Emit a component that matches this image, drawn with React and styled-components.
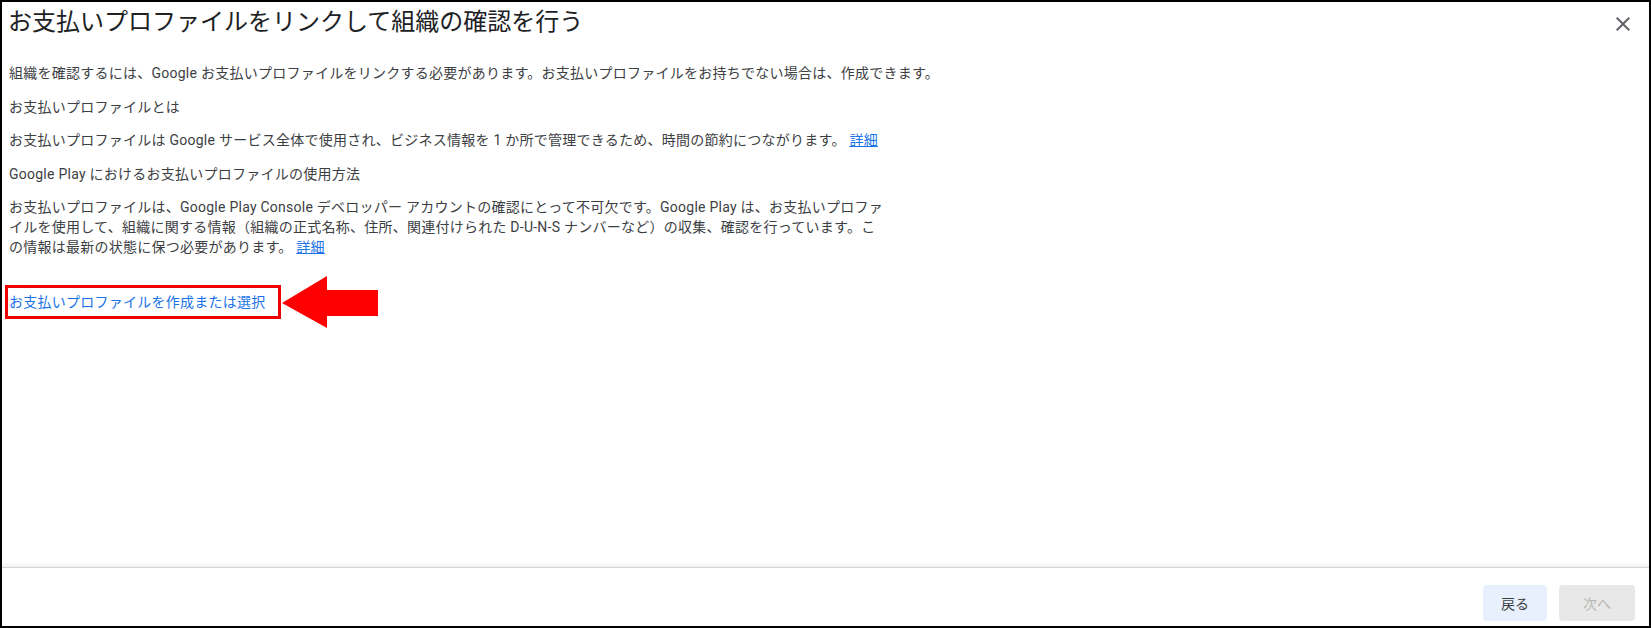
import React from 'react';
import styled, { createGlobalStyle } from 'styled-components';

const GlobalStyle = createGlobalStyle`
  body {
    margin: 0;
    background: #fff;
    font-family: Roboto, "Noto Sans CJK JP", sans-serif;
  }
`;

const CloseIcon = () => (
  <svg width="24" height="24" viewBox="0 0 24 24" fill="#5f6368">
    <path d="M19 6.41 17.59 5 12 10.59 6.41 5 5 6.41 10.59 12 5 17.59 6.41 19 12 13.41 17.59 19 19 17.59 13.41 12z" />
  </svg>
);

const Arrow = () => (
  <svg width="96" height="52" viewBox="0 0 96 52">
    <polygon points="0,27 45,0 45,14 96,14 96,40 45,40 45,52" fill="#ff0000" />
  </svg>
);

const App = () => {
  return (
    <>
      <GlobalStyle />
      <Dialog>
        <Header>
          <Title>お支払いプロファイルをリンクして組織の確認を行う</Title>
          <CloseButton aria-label="閉じる">
            <CloseIcon />
          </CloseButton>
        </Header>
        <Body>
          <Text>
            組織を確認するには、Google お支払いプロファイルをリンクする必要があります。お支払いプロファイルをお持ちでない場合は、作成できます。
          </Text>
          <Text>お支払いプロファイルとは</Text>
          <Text>
            お支払いプロファイルは Google サービス全体で使用され、ビジネス情報を 1 か所で管理できるため、時間の節約につながります。{' '}
            <Link href="#">詳細</Link>
          </Text>
          <Text>Google Play におけるお支払いプロファイルの使用方法</Text>
          <Text narrow>
            お支払いプロファイルは、Google Play Console デベロッパー アカウントの確認にとって不可欠です。Google Play は、お支払いプロファイルを使用して、組織に関する情報（組織の正式名称、住所、関連付けられた D-U-N-S ナンバーなど）の収集、確認を行っています。この情報は最新の状態に保つ必要があります。{' '}
            <Link href="#">詳細</Link>
          </Text>
          <ActionRow>
            <Highlight>
              <ActionLink href="#">お支払いプロファイルを作成または選択</ActionLink>
            </Highlight>
            <Arrow />
          </ActionRow>
        </Body>
        <Footer>
          <Button variant="back">戻る</Button>
          <Button variant="disabled" disabled>
            次へ
          </Button>
        </Footer>
      </Dialog>
    </>
  );
};

export default App;

const Dialog = styled.div`
  width: 1651px;
  height: 628px;
  box-sizing: border-box;
  border: 2px solid #000;
  display: flex;
  flex-direction: column;
  background: #fff;
  color: #3c4043;
`;

const Header = styled.div`
  display: flex;
  align-items: flex-start;
  justify-content: space-between;
  padding: 4px 14px 0 6px;
`;

const Title = styled.h1`
  margin: 0;
  font-size: 24px;
  font-weight: 400;
  line-height: 32px;
  color: #202124;
`;

const CloseButton = styled.button`
  margin-top: 6px;
  padding: 0;
  border: none;
  background: none;
  width: 24px;
  height: 24px;
  cursor: pointer;
`;

const Body = styled.div`
  flex: 1;
  display: flex;
  flex-direction: column;
  align-items: flex-start;
  gap: 13.5px;
  padding: 25px 0 0 7px;
`;

const Text = styled.p`
  margin: 0;
  font-size: 14px;
  line-height: 20px;
  letter-spacing: 0.25px;
  color: #3c4043;
  max-width: ${({ narrow }) => (narrow ? '878px' : 'none')};
`;

const Link = styled.a`
  color: #1a73e8;
  text-decoration: underline;
`;

const ActionRow = styled.div`
  display: flex;
  align-items: center;
  margin-top: 5px;
  margin-left: -4px;
  gap: 1px;
`;

const Highlight = styled.div`
  border: 3px solid #ee0000;
  padding: 4px 12px 4px 1px;
`;

const ActionLink = styled.a`
  display: block;
  font-size: 14px;
  line-height: 20px;
  letter-spacing: 0.25px;
  color: #1a73e8;
  text-decoration: none;
`;

const Footer = styled.div`
  display: flex;
  justify-content: flex-end;
  gap: 12px;
  padding: 17px 14px 5px;
  border-top: 1px solid #d3d3d3;
  box-shadow: 0 -2px 4px rgba(0, 0, 0, 0.07);
`;

const Button = styled.button`
  height: 36px;
  min-width: ${({ variant }) => (variant === 'back' ? '64px' : '76px')};
  padding: 0 16px;
  border: none;
  border-radius: 4px;
  font-family: Roboto, "Noto Sans CJK JP", sans-serif;
  font-size: 14px;
  background: ${({ variant }) => (variant === 'back' ? '#e8f0fe' : '#e8e8e8')};
  color: ${({ variant }) => (variant === 'back' ? '#3c4043' : '#b5b5b5')};
  cursor: ${({ disabled }) => (disabled ? 'default' : 'pointer')};
`;
